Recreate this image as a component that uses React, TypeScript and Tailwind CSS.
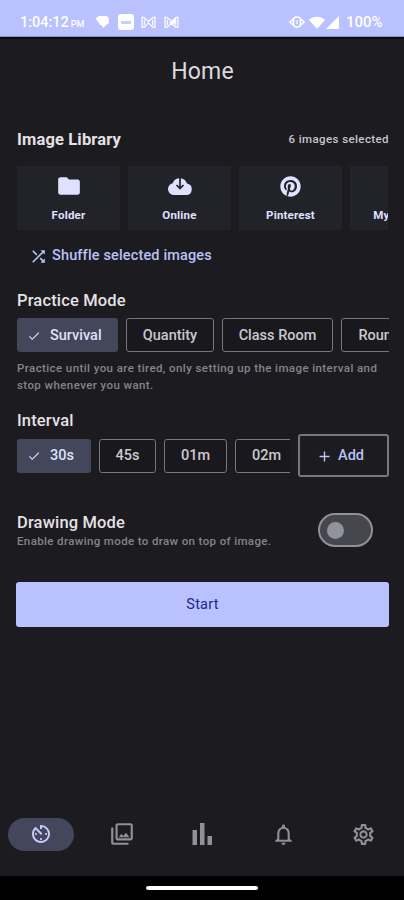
import type { ReactNode } from "react";
import { FaPinterest } from "react-icons/fa";
import {
  MdAdd,
  MdAvTimer,
  MdCheck,
  MdFolder,
  MdNotificationsNone,
  MdOutlinePhotoLibrary,
  MdOutlineSettings,
  MdShuffle,
} from "react-icons/md";

const sectionTitleClass =
  "whitespace-nowrap text-[16.5px] leading-[20px] font-medium tracking-[0.15px] text-[#e5e1e6]";

const hintClass =
  "text-[11.5px] leading-[17px] font-medium whitespace-nowrap text-[#858489]";

const sources: { label: string; icon: ReactNode }[] = [
  { label: "Folder", icon: <MdFolder size={26} /> },
  { label: "Online", icon: <CloudGlyph /> },
  { label: "Pinterest", icon: <FaPinterest size={21} /> },
  { label: "My Library", icon: null },
];

const modes = [
  { label: "Survival", width: "w-[101px]", selected: true },
  { label: "Quantity", width: "w-[88px]" },
  { label: "Class Room", width: "w-[111px]" },
  { label: "Rounds", width: "w-[84px]" },
];

const intervals = [
  { label: "30s", width: "w-[74px]", selected: true },
  { label: "45s", width: "w-[57px]" },
  { label: "01m", width: "w-[63px]" },
  { label: "02m", width: "w-[63px]" },
];

const navItems: { key: string; icon: ReactNode }[] = [
  { key: "practice", icon: <MdAvTimer size={24} /> },
  { key: "library", icon: <MdOutlinePhotoLibrary size={26} /> },
  { key: "stats", icon: <BarsGlyph /> },
  { key: "alerts", icon: <MdNotificationsNone size={25} /> },
  { key: "settings", icon: <MdOutlineSettings size={25} /> },
];

function CloudGlyph() {
  return (
    <svg width="24" height="18" viewBox="0 0 24 18">
      <path
        d="M6 18a6 6 0 0 1-1.300-11.850A7.500 7.500 0 0 1 19 6.600 5.750 5.750 0 0 1 18.250 18z"
        fill="currentColor"
      />
      <path d="M12 0v10M8.500 8l3.500 3.500L15.500 8" fill="none" stroke="#212328" strokeWidth="1.700" />
    </svg>
  );
}

function BarsGlyph() {
  return (
    <svg width="22" height="22" viewBox="0 0 22 22" fill="currentColor">
      <path d="M1.500 7h4.500V22H1.500zM9 0h4.500v22H9zM16.500 13H21v9h-4.500z" />
    </svg>
  );
}

function MailGlyph({ filled = false }: { filled?: boolean }) {
  return (
    <svg width="15" height="12" viewBox="0 0 16 13" fill="none" stroke="currentColor" strokeWidth="1.3">
      <path d="M1 12V1.500h2L8 6l5-4.500h2V12h-2.500L8 7.500 3.500 12z" />
      <path d="M3.500 4v6M12.500 4v6" />
      {filled && <path d="M8 6l5-4v5l-5 3-3-3z" fill="currentColor" stroke="none" />}
    </svg>
  );
}

function StatusBar() {
  return (
    <div className="flex h-[37px] shrink-0 items-center justify-between border-b border-[#8e92bb] bg-[#b9c1ff] pt-[8px] pr-[18px] pl-[20px] text-white">
      <div className="flex items-center">
        <span className="w-[64px] pt-[2px] text-[14.5px] leading-none font-medium whitespace-nowrap">
          1:04:12<span className="ml-[2px] text-[9px]">PM</span>
        </span>
        <svg className="ml-[12px]" width="13" height="12" viewBox="0 0 13 12" fill="currentColor">
          <path d="M3 0h6a4 4 0 0 1 4 4v1a4 4 0 0 1-3 4L7.500 12 6 9.500H5.500A3 3 0 0 1 3 7L0 3.500V2z" />
        </svg>
        <span className="ml-[9px] flex h-[16px] w-[16px] items-center justify-center rounded-[3px] bg-white">
          <span className="h-[3px] w-[10px] bg-[#c9ceff]" />
        </span>
        <span className="ml-[7px]">
          <MailGlyph />
        </span>
        <span className="ml-[8px]">
          <MailGlyph filled />
        </span>
      </div>
      <div className="flex items-center">
        <svg width="16" height="12" viewBox="0 0 16 12" fill="none" stroke="currentColor">
          <path d="M4 3L1 6l3 3M12 3l3 3-3 3" strokeWidth="1.600" />
          <rect x="4.500" y="1" width="7" height="10" rx="3" strokeWidth="1.600" />
          <path d="M8 4v4" strokeWidth="1.200" />
        </svg>
        <svg className="ml-[4px]" width="16" height="13" viewBox="0 0 16 13" fill="currentColor">
          <path d="M8 13L0 4a11.500 11.500 0 0 1 16 0z" />
        </svg>
        <svg className="ml-px" width="13" height="13" viewBox="0 0 13 13" fill="currentColor">
          <path d="M13 0v13H0z" />
        </svg>
        <span className="ml-[7px] w-[40px] text-[15px] leading-none font-medium">100%</span>
      </div>
    </div>
  );
}

function Chip({
  label,
  width,
  selected = false,
}: {
  label: string;
  width: string;
  selected?: boolean;
}) {
  return (
    <button
      className={`flex h-[34px] shrink-0 items-center rounded-[3px] pt-px text-[14.5px] font-medium whitespace-nowrap ${width} ${
        selected
          ? "gap-[9px] bg-[#44475b] pl-[10px] text-[#dfe0fa]"
          : "justify-center border-[1.5px] border-[#77767c] bg-[#19181d] text-[#cbc8d0]"
      }`}
    >
      {selected && <MdCheck size={14} />}
      {label}
    </button>
  );
}

export default function App() {
  return (
    <div className="flex h-[900px] w-[404px] flex-col overflow-hidden bg-[#1c1b20] font-['Roboto',sans-serif] antialiased">
      <StatusBar />

      <header className="flex h-[67px] shrink-0 items-center justify-center border-t-2 border-[#0c0c10] pl-px">
        <h1 className="text-[23px] leading-none tracking-[0.2px] text-[#dddade]">Home</h1>
      </header>

      <main className="flex flex-1 flex-col pt-[26px] pr-[15px] pl-[16px]">
        <div className="flex items-center justify-between pl-px">
          <h2 className="text-[16.5px] leading-[20px] font-bold tracking-[0.15px] text-[#e5e1e6]">
            Image Library
          </h2>
          <span className="text-[11.5px] font-medium tracking-[0.4px] text-[#c6c4cd]">
            6 images selected
          </span>
        </div>

        <div className="mt-[16px] mr-px flex gap-[8px] overflow-hidden pl-px">
          {sources.map((source) => (
            <button
              key={source.label}
              className="flex h-[64px] w-[103px] shrink-0 flex-col items-center bg-[#212328] pt-[6px] text-[#e0e0ff]"
            >
              <span className="flex h-[28px] items-center">{source.icon}</span>
              <span className="mt-[7px] text-[11.5px] leading-[16px] font-bold tracking-[0.2px]">
                {source.label}
              </span>
            </button>
          ))}
        </div>

        <button className="mt-[16px] ml-[13px] flex h-[20px] items-center gap-[4px] text-[14.5px] font-medium tracking-[0.15px] text-[#b9c1f5]">
          <MdShuffle size={19} />
          Shuffle selected images
        </button>

        <section className="mt-[25px] pl-px">
          <h2 className={sectionTitleClass}>Practice Mode</h2>
          <div className="mt-[7px] flex gap-[8px] overflow-hidden">
            {modes.map((mode) => (
              <Chip key={mode.label} {...mode} />
            ))}
          </div>
          <p className={`mt-[8px] tracking-[0.41px] ${hintClass}`}>
            Practice until you are tired, only setting up the image interval and
            <br />
            stop whenever you want.
          </p>
        </section>

        <section className="mt-[17px] pl-px">
          <h2 className={sectionTitleClass}>Interval</h2>
          <div className="mt-[3px] flex items-center gap-[8px]">
            <div className="flex w-[273px] gap-[8px] overflow-hidden">
              {intervals.map((interval) => (
                <Chip key={interval.label} {...interval} />
              ))}
            </div>
            <button className="flex h-[43px] w-[91px] shrink-0 items-center justify-center gap-[5px] rounded-[3px] border-2 border-[#77767c] pr-[7px] pt-px text-[14.5px] font-medium text-[#b9c1f5]">
              <MdAdd size={17} />
              Add
            </button>
          </div>
        </section>

        <section className="mt-[36px] flex items-center justify-between pr-[16px] pl-px">
          <div>
            <h2 className={sectionTitleClass}>Drawing Mode</h2>
            <p className={`tracking-[0.37px] ${hintClass}`}>
              Enable drawing mode to draw on top of image.
            </p>
          </div>
          <button
            role="switch"
            aria-checked={false}
            className="-mt-[3px] flex h-[34px] w-[55px] items-center rounded-full border-2 border-[#919096] bg-[#46464e] pl-[7px]"
          >
            <span className="h-[17px] w-[17px] rounded-full bg-[#92929c]" />
          </button>
        </section>

        <button className="mt-[32px] flex h-[45px] shrink-0 items-center justify-center rounded-[3px] bg-[#b9c1ff] pt-px text-[14.5px] tracking-[0.2px] text-[#20278c]">
          Start
        </button>
      </main>

      <nav className="grid h-[84px] shrink-0 grid-cols-5 items-center pl-px text-[#918f98]">
        {navItems.map((item, index) => (
          <div key={item.key} className="flex justify-center">
            <span
              className={`flex h-[33px] w-[66px] items-center justify-center rounded-full ${
                index === 0 ? "bg-[#44475b] text-[#c7cbff]" : ""
              }`}
            >
              {item.icon}
            </span>
          </div>
        ))}
      </nav>

      <div className="flex h-[24px] shrink-0 justify-center bg-black pt-[10px]">
        <div className="h-[4px] w-[112px] rounded-full bg-white" />
      </div>
    </div>
  );
}
